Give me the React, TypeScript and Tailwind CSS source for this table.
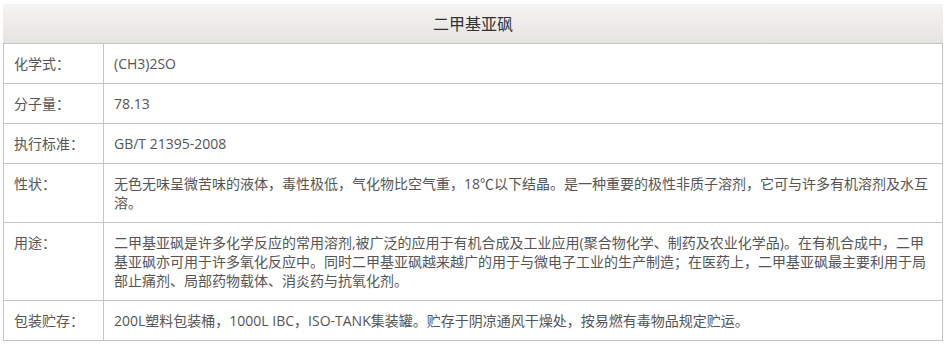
import React from "react";

const rows: { label: string; value: string }[] = [
  { label: "化学式：", value: "(CH3)2SO" },
  { label: "分子量：", value: "78.13" },
  { label: "执行标准：", value: "GB/T 21395-2008" },
  {
    label: "性状：",
    value:
      "无色无味呈微苦味的液体，毒性极低，气化物比空气重，18℃以下结晶。是一种重要的极性非质子溶剂，它可与许多有机溶剂及水互溶。",
  },
  {
    label: "用途：",
    value:
      "二甲基亚砜是许多化学反应的常用溶剂,被广泛的应用于有机合成及工业应用(聚合物化学、制药及农业化学品)。在有机合成中，二甲基亚砜亦可用于许多氧化反应中。同时二甲基亚砜越来越广的用于与微电子工业的生产制造；在医药上，二甲基亚砜最主要利用于局部止痛剂、局部药物载体、消炎药与抗氧化剂。",
  },
  {
    label: "包装贮存：",
    value: "200L塑料包装桶，1000L IBC，ISO-TANK集装罐。贮存于阴凉通风干燥处，按易燃有毒物品规定贮运。",
  },
];

export default function App() {
  return (
    <div
      className="bg-white pt-[4px] pl-[3px] pr-[3px] w-[946px] h-[345px]"
      style={{ fontFamily: '"Open Sans", "Noto Sans CJK SC", sans-serif' }}
    >
      <div className="w-[940px]">
        <div className="h-[40px] flex items-center justify-center bg-gradient-to-b from-[#f5f4f2] to-[#e6e4e1] border-b border-[#c6c5c1] text-[16px] text-[#333]">
          二甲基亚砜
        </div>
        <div className="grid grid-cols-[100px_1fr] border-l border-r border-[#c6c5c1]">
          {rows.map((r) => (
            <React.Fragment key={r.label}>
              <div className="border-b border-r border-[#c6c5c1] px-[10px] py-[10px] text-[14px] leading-[19px] text-[#555]">
                {r.label}
              </div>
              <div className="border-b border-[#c6c5c1] px-[10px] py-[10px] text-[14px] leading-[19px] text-[#555]">
                {r.value}
              </div>
            </React.Fragment>
          ))}
        </div>
      </div>
    </div>
  );
}
